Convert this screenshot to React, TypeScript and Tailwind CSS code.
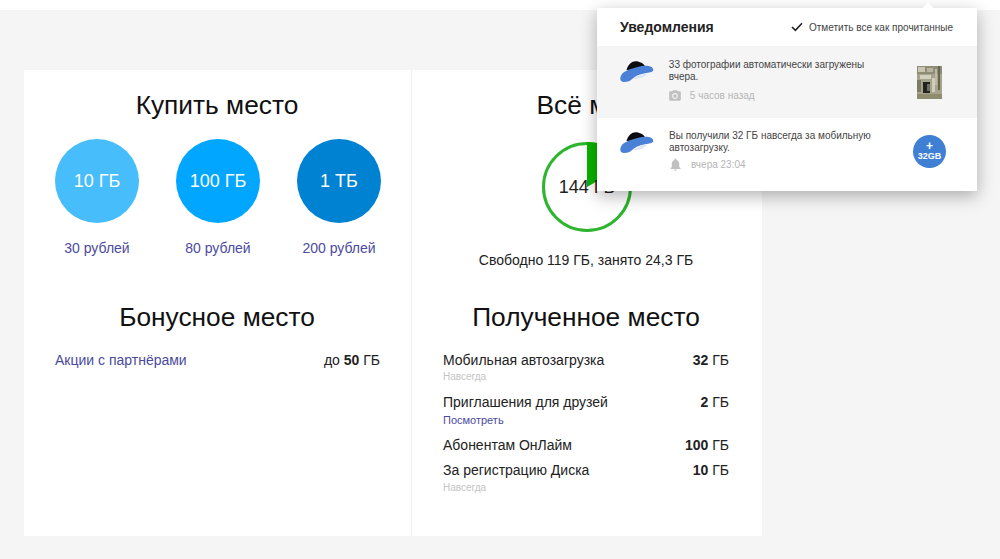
import React from "react";
import { MdPhotoCamera, MdNotifications } from "react-icons/md";

const Hat = () => (
  <svg width="34" height="22" viewBox="0 0 34 22" className="shrink-0">
    <path d="M6.5 9 C8 3.5 12 0.3 15.5 0.3 C20 0.3 23.5 2.5 25.5 6 L25 8 Z" fill="#0b0b10" />
    <path d="M0.3 17.5 C0.5 14 3 11 7 9.5 C13 6.8 21 4.6 27 4.8 C31 5 33.8 7.2 33.2 9.4 C32.5 11 29 11.6 25 12.2 C19 13 14.5 15.5 11.5 18.5 C9 20.8 5 21.4 2.6 20.8 C1 20.3 0.2 19 0.3 17.5 Z" fill="#4a80d5" />
    <path d="M13.5 18 C16.5 15.2 21 13.2 27 12.6 C25.5 15.6 20 18.4 13.5 18 Z" fill="#dbe5f4" />
  </svg>
);

const Thumb = () => (
  <svg width="25" height="33" viewBox="0 0 25 33" className="shrink-0">
    <rect width="25" height="33" fill="#a6a38c" />
    <rect x="0" y="0" width="25" height="8" fill="#8f8d76" />
    <rect x="1" y="1" width="7" height="5" fill="#c9c7b4" />
    <rect x="10" y="2" width="6" height="4" fill="#b7b5a0" />
    <rect x="21" y="0" width="2" height="24" fill="#66644f" />
    <rect x="18" y="3" width="2" height="16" fill="#bdbba6" />
    <rect x="3" y="9" width="11" height="4" fill="#d2d0be" />
    <rect x="0" y="14" width="4" height="12" fill="#7e7c66" />
    <rect x="6" y="16" width="7" height="11" fill="#24221c" />
    <rect x="10" y="18" width="3" height="7" fill="#6d6f66" />
    <rect x="15" y="12" width="3" height="14" fill="#d0cebb" />
    <rect x="0" y="28" width="25" height="5" fill="#8e8c6c" />
  </svg>
);

const Circle = ({ label, price, color }: { label: string; price: string; color: string }) => (
  <div className="flex w-[84px] flex-col items-center">
    <div className={`flex h-[84px] w-[84px] items-center justify-center rounded-full text-[18px] text-white ${color}`}>{label}</div>
    <div className="mt-[17px] whitespace-nowrap text-[14px] leading-4 text-[#4a4a9e]">{price}</div>
  </div>
);

const Row = ({ label, bold, className }: { label: string; bold: string; className?: string }) => (
  <div className={`mr-[2px] flex justify-between text-[14px] leading-4 text-[#222] ${className ?? ""}`}>
    <span>{label}</span>
    <span>
      <b>{bold}</b> ГБ
    </span>
  </div>
);

export default function App() {
  return (
    <div className="relative h-[559px] w-[1000px] overflow-hidden bg-[#f5f5f5] font-['Liberation_Sans',Arial,sans-serif]">
      <div className="h-[10px] bg-white" />
      <div className="ml-6 mt-[60px] flex h-[466px] w-[738px] bg-white text-[#111]">
        <div className="w-[388px] border-r border-[#eeeeee] pl-[31px] pr-[30px] pt-[20px]">
          <h2 className="pr-[2px] text-center text-[26.3px] leading-[30px]">Купить место</h2>
          <div className="mt-[19px] flex justify-between">
            <Circle label="10 ГБ" price="30 рублей" color="bg-[#47bdfb]" />
            <Circle label="100 ГБ" price="80 рублей" color="bg-[#00a6ff]" />
            <Circle label="1 ТБ" price="200 рублей" color="bg-[#0082d2]" />
          </div>
          <h2 className="mt-[46px] pr-[2px] text-center text-[26.3px] leading-[30px]">Бонусное место</h2>
          <div className="mr-px mt-5 flex justify-between text-[14px] leading-4 text-[#222]">
            <span className="text-[#4a4a9e]">Акции с партнёрами</span>
            <span>
              до <b>50</b> ГБ
            </span>
          </div>
        </div>
        <div className="w-[350px] px-[31px] pt-[20px]">
          <h2 className="pl-[24px] text-center text-[26.3px] leading-[30px]">Всё место</h2>
          <div className="mx-auto mt-[22px] grid h-[90px] w-[90px] place-items-center">
            <svg width="90" height="90" viewBox="0 0 90 90" className="col-start-1 row-start-1">
              <circle cx="45" cy="45" r="43.5" fill="none" stroke="#2db52d" strokeWidth="3" />
              <path d="M45 45 L45 0 A45 45 0 0 1 84 22.5 Z" fill="#0ab400" />
            </svg>
            <span className="col-start-1 row-start-1 whitespace-nowrap text-[18px] text-[#222]">144 ГБ</span>
          </div>
          <div className="mt-5 pr-[2px] text-center text-[14px] leading-4 text-[#222]">Свободно 119 ГБ, занято 24,3 ГБ</div>
          <h2 className="mt-[34px] pr-[2px] text-center text-[26.3px] leading-[30px]">Полученное место</h2>
          <Row className="mt-5" label="Мобильная автозагрузка" bold="32" />
          <div className="mt-[3px] text-[10px] leading-3 text-[#c4c4c4]">Навсегда</div>
          <Row className="mt-[11px]" label="Приглашения для друзей" bold="2" />
          <div className="mt-1 text-[11px] leading-3 text-[#4a4a9e]">Посмотреть</div>
          <Row className="mt-[11px]" label="Абонентам ОнЛайм" bold="100" />
          <Row className="mt-[9px]" label="За регистрацию Диска" bold="10" />
          <div className="mt-1 text-[10px] leading-3 text-[#c4c4c4]">Навсегда</div>
        </div>
      </div>

      <div className="absolute left-[597px] top-2 w-[380px] bg-white shadow-[0_5px_16px_rgba(0,0,0,0.3)]">
        <div className="absolute -top-[4px] left-[327px] h-2 w-2 rotate-45 bg-white" />
        <div className="flex h-[38px] items-center justify-between pl-[23px] pr-6">
          <span className="text-[14px] font-bold text-[#222]">Уведомления</span>
          <span className="flex items-center gap-[6px] text-[10px] text-[#444]">
            <svg width="12" height="10" viewBox="0 0 12 10">
              <path d="M1 5 L4.4 8.4 L11 1.2" fill="none" stroke="#222" strokeWidth="1.6" />
            </svg>
            Отметить все как прочитанные
          </span>
        </div>
        <div className="flex h-[72px] bg-[#f5f5f5] pl-[23px] pr-[35px] pt-[13px]">
          <div className="w-[49px] pt-[2px]"><Hat /></div>
          <div className="w-[248px] text-[10px] leading-3 text-[#444]">
            <div className="w-[210px]">33 фотографии автоматически загружены вчера.</div>
            <div className="mt-[6px] flex items-center gap-2 text-[#b5b5b5]">
              <MdPhotoCamera size={14} color="#c0c0c0" className="-ml-px" />
              <span>5 часов назад</span>
            </div>
          </div>
          <div className="ml-px mt-[7px]"><Thumb /></div>
        </div>
        <div className="flex h-[73px] pl-[23px] pr-[31px] pt-3">
          <div className="w-[49px] pt-[2px]"><Hat /></div>
          <div className="w-[244px] text-[10px] leading-3 text-[#444]">
            <div className="w-[220px]">Вы получили 32 ГБ навсегда за мобильную автозагрузку.</div>
            <div className="mt-[3px] flex items-center gap-2 text-[#b5b5b5]">
              <MdNotifications size={15} color="#c0c0c0" className="-ml-px" />
              <span>вчера 23:04</span>
            </div>
          </div>
          <div className="mt-[5px] flex h-[33px] w-[33px] shrink-0 flex-col items-center justify-center rounded-full bg-[#3f7fd4] font-bold text-white">
            <span className="text-[12px] leading-[9px]">+</span>
            <span className="text-[9px] leading-[10px]">32GB</span>
          </div>
        </div>
      </div>
    </div>
  );
}
